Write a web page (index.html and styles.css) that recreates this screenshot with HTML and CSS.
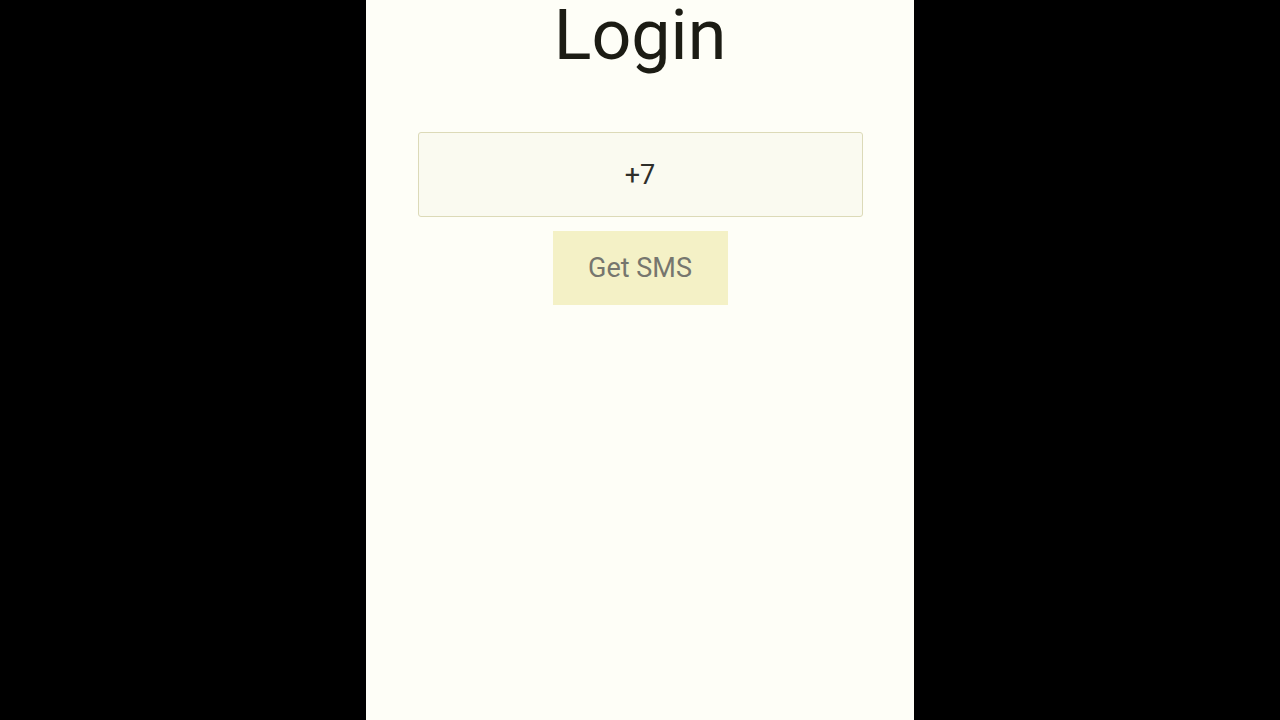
FILE: index.html
```html
<!DOCTYPE html>
<html>
<head>
<meta charset="utf-8">
<link rel="stylesheet" href="styles.css">
</head>
<body>
<main class="screen">
  <h1 class="title">Login</h1>
  <form class="form">
    <div class="phone">+7</div>
    <button type="button" class="sms">Get SMS</button>
  </form>
</main>
</body>
</html>
```
FILE: styles.css
```css
html, body {
  margin: 0;
  padding: 0;
  height: 100%;
  background: #000;
}
body {
  display: flex;
  justify-content: center;
  font-family: Roboto, "Liberation Sans", sans-serif;
}
.screen {
  width: 548px;
  height: 720px;
  background: #fefef7;
  display: flex;
  flex-direction: column;
  align-items: center;
}
.title {
  margin: 0;
  padding-top: 0;
  font-size: 70px;
  line-height: 70px;
  font-weight: 400;
  color: #1c1c14;
}
.form {
  margin-top: 62px;
  display: flex;
  flex-direction: column;
  align-items: center;
  gap: 14px;
}
.phone {
  box-sizing: border-box;
  width: 445px;
  height: 85px;
  border: 1px solid #dcdab8;
  border-radius: 3px;
  background: #fafaf0;
  display: flex;
  align-items: center;
  justify-content: center;
  font-size: 27px;
  color: #2e2e2a;
}
.sms {
  box-sizing: border-box;
  width: 175px;
  height: 74px;
  border: none;
  background: #f4f1c6;
  font-family: Roboto, "Liberation Sans", sans-serif;
  font-size: 27px;
  color: #76766e;
  padding: 0;
}
```
